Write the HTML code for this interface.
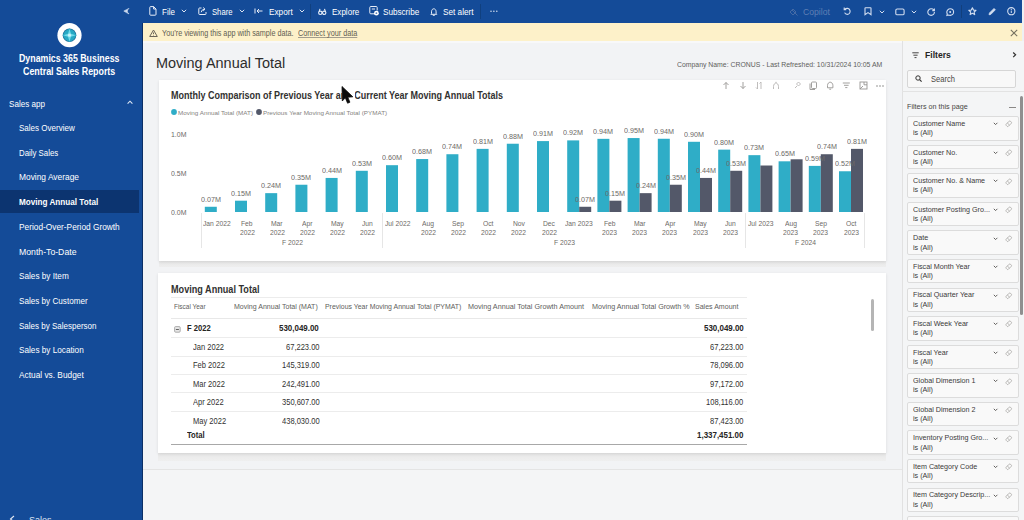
<!DOCTYPE html><html><head><meta charset="utf-8"><style>
html,body{margin:0;padding:0;width:1024px;height:520px;overflow:hidden;background:#f3f4f5;font-family:"Liberation Sans",sans-serif}
.t{position:absolute;white-space:nowrap;line-height:normal;transform-origin:0 0}
.a{position:absolute}
svg{position:absolute;overflow:visible}
</style></head><body>
<div class="a" style="left:0;top:0;width:1024px;height:23px;background:#144b98"></div>
<div class="a" style="left:0;top:0;width:143px;height:520px;background:#144b98"></div>
<div class="a" style="left:142px;top:23px;width:1px;height:497px;background:#0b2f66"></div>
<div class="a" style="left:0;top:189.5px;width:138.5px;height:23.5px;background:#0c3470"></div>
<svg style="left:57px;top:23px" width="25" height="25" viewBox="0 0 25 25">
<circle cx="12.5" cy="12.2" r="12.1" fill="#fff"/>
<circle cx="12.5" cy="12.2" r="6.8" fill="#1f6f9a"/>
<path d="M12.5 5.4 L16.8 7.9 L19.3 12.2 L16.8 16.5 L12.5 19 L8.2 16.5 L5.7 12.2 L8.2 7.9 Z" fill="#27a9c4"/>
<path d="M12.5 6 L14 10.7 L18.7 12.2 L14 13.7 L12.5 18.4 L11 13.7 L6.3 12.2 L11 10.7 Z" fill="#6fd9ea"/>
<circle cx="12.5" cy="12.2" r="1.6" fill="#c9f4fa"/>
</svg>
<div class="t" style="left:19.40px;top:52.83px;font-size:10.47px;font-weight:bold;color:#fff;transform:scaleX(0.842);">Dynamics 365 Business</div>
<div class="t" style="left:23.40px;top:65.83px;font-size:10.47px;font-weight:bold;color:#fff;transform:scaleX(0.848);">Central Sales Reports</div>
<div class="t" style="left:8.75px;top:98.06px;font-size:9.88px;color:#fff;transform:scaleX(0.819);">Sales app</div>
<svg style="left:127px;top:100.3px" width="6" height="5" viewBox="0 0 6 5"><path d="M0.6 3.6 L3 1.2 L5.4 3.6" fill="none" stroke="#dfe8f5" stroke-width="1.1"/></svg>
<svg style="left:123px;top:7.8px" width="7" height="7" viewBox="0 0 7 7"><path d="M6 0.4 Q3.5 1.4 0.8 3.1 Q3.5 4.8 6 5.9 Q2.6 3.1 6 0.4 Z" fill="#cfdcf0" stroke="#cfdcf0" stroke-width="0.6" stroke-linejoin="round"/></svg>
<div class="t" style="left:18.50px;top:122.06px;font-size:9.88px;color:#fff;transform:scaleX(0.813);">Sales Overview</div>
<div class="t" style="left:18.50px;top:146.76px;font-size:9.88px;color:#fff;transform:scaleX(0.793);">Daily Sales</div>
<div class="t" style="left:18.50px;top:171.46px;font-size:9.88px;color:#fff;transform:scaleX(0.849);">Moving Average</div>
<div class="t" style="left:18.50px;top:196.16px;font-size:9.88px;font-weight:bold;color:#fff;transform:scaleX(0.825);">Moving Annual Total</div>
<div class="t" style="left:18.50px;top:220.86px;font-size:9.88px;color:#fff;transform:scaleX(0.842);">Period-Over-Period Growth</div>
<div class="t" style="left:18.50px;top:245.56px;font-size:9.88px;color:#fff;transform:scaleX(0.880);">Month-To-Date</div>
<div class="t" style="left:18.50px;top:270.26px;font-size:9.88px;color:#fff;transform:scaleX(0.831);">Sales by Item</div>
<div class="t" style="left:18.50px;top:294.96px;font-size:9.88px;color:#fff;transform:scaleX(0.823);">Sales by Customer</div>
<div class="t" style="left:18.50px;top:319.66px;font-size:9.88px;color:#fff;transform:scaleX(0.811);">Sales by Salesperson</div>
<div class="t" style="left:18.50px;top:344.36px;font-size:9.88px;color:#fff;transform:scaleX(0.830);">Sales by Location</div>
<div class="t" style="left:18.50px;top:369.06px;font-size:9.88px;color:#fff;transform:scaleX(0.842);">Actual vs. Budget</div>
<div class="t" style="left:29.00px;top:514.32px;font-size:9.59px;color:#dfe6f2;transform:scaleX(0.938);">Sales...</div>
<svg style="left:9px;top:515px" width="6" height="8" viewBox="0 0 6 8"><path d="M5 1 L1.5 4 L5 7" fill="none" stroke="#dfe6f2" stroke-width="1.1"/></svg>
<svg style="left:149.2px;top:6.4px" width="8" height="10" viewBox="0 0 8 10"><path d="M1.6 0.6 H4.6 L7 3 V8.4 Q7 9.2 6.2 9.2 H1.6 Q0.8 9.2 0.8 8.4 V1.4 Q0.8 0.6 1.6 0.6 Z M4.6 0.6 V3 H7" fill="none" stroke="#e8eef8" stroke-width="1"/></svg>
<div class="t" style="left:162.30px;top:7.08px;font-size:9.30px;color:#ffffff;transform:scaleX(0.861);">File</div>
<svg style="left:181.2px;top:9px" width="6" height="4" viewBox="0 0 6 4"><path d="M0.8 0.8 L3 3 L5.2 0.8" fill="none" stroke="#dbe4f2" stroke-width="1"/></svg>
<svg style="left:197.5px;top:7px" width="9" height="9" viewBox="0 0 9 9"><path d="M3.5 1 H1.5 Q0.8 1 0.8 1.7 V6.8 Q0.8 7.5 1.5 7.5 H7.3 Q8 7.5 8 6.8 V5 M3.2 5.2 Q3.5 2.5 6.5 2.2 M5.2 0.5 L7 2.2 L5.2 3.9" fill="none" stroke="#e8eef8" stroke-width="1"/></svg>
<div class="t" style="left:211.60px;top:7.08px;font-size:9.30px;color:#ffffff;transform:scaleX(0.826);">Share</div>
<svg style="left:238.5px;top:9px" width="6" height="4" viewBox="0 0 6 4"><path d="M0.8 0.8 L3 3 L5.2 0.8" fill="none" stroke="#dbe4f2" stroke-width="1"/></svg>
<svg style="left:254px;top:8.3px" width="9" height="6" viewBox="0 0 9 6"><path d="M1 0.5 V5.5 M3 3 H8.5 M5 1 L3 3 L5 5" fill="none" stroke="#e8eef8" stroke-width="1"/></svg>
<div class="t" style="left:268.70px;top:7.08px;font-size:9.30px;color:#ffffff;transform:scaleX(0.882);">Export</div>
<svg style="left:299.2px;top:9px" width="6" height="4" viewBox="0 0 6 4"><path d="M0.8 0.8 L3 3 L5.2 0.8" fill="none" stroke="#dbe4f2" stroke-width="1"/></svg>
<div class="a" style="left:310px;top:4px;width:1px;height:15px;background:#10407f"></div>
<svg style="left:318px;top:8.4px" width="9" height="8" viewBox="0 0 9 8"><circle cx="2.3" cy="4.8" r="1.7" fill="none" stroke="#e8eef8" stroke-width="1.1"/><circle cx="6.2" cy="4.8" r="1.7" fill="none" stroke="#e8eef8" stroke-width="1.1"/><path d="M1.2 3.4 L2 0.8 M7.3 3.4 L6.5 0.8 M3.9 4.5 H4.6" fill="none" stroke="#e8eef8" stroke-width="1.1"/></svg>
<div class="t" style="left:331.50px;top:7.08px;font-size:9.30px;color:#ffffff;transform:scaleX(0.866);">Explore</div>
<svg style="left:368.5px;top:5.8px" width="11" height="11" viewBox="0 0 11 11"><path d="M6 7.8 H1.8 Q0.8 7.8 0.8 6.8 V1.5 Q0.8 0.5 1.8 0.5 H7.2 Q8.2 0.5 8.2 1.5 V4.5 M2.8 3 H6" fill="none" stroke="#e8eef8" stroke-width="1"/><circle cx="7.4" cy="7.2" r="2.4" fill="#fff"/><circle cx="7.4" cy="7.2" r="0.9" fill="#5a7fb8"/></svg>
<div class="t" style="left:383.20px;top:7.08px;font-size:9.30px;color:#ffffff;transform:scaleX(0.875);">Subscribe</div>
<svg style="left:429.8px;top:7.5px" width="8" height="8" viewBox="0 0 8 8"><path d="M1.5 5.5 V3.8 C1.5 2 2.5 0.8 3.8 0.8 C5.1 0.8 6.1 2 6.1 3.8 V5.5 L6.8 6.3 H0.8 Z M2.8 7.3 H4.8" fill="none" stroke="#e8eef8" stroke-width="1"/></svg>
<div class="t" style="left:443.40px;top:7.08px;font-size:9.30px;color:#ffffff;transform:scaleX(0.883);">Set alert</div>
<div class="a" style="left:480px;top:4px;width:1px;height:15px;background:#10407f"></div>
<svg style="left:489.5px;top:10.3px" width="8" height="3" viewBox="0 0 8 3"><circle cx="1" cy="1.2" r="0.75" fill="#dbe4f2"/><circle cx="3.9" cy="1.2" r="0.75" fill="#dbe4f2"/><circle cx="6.8" cy="1.2" r="0.75" fill="#dbe4f2"/></svg>
<svg style="left:788.5px;top:6.5px" width="10" height="10" viewBox="0 0 10 10"><path d="M1 5 L4 2 L7 5 L4 8 Z M3 3 L8.5 8.5" fill="none" stroke="#4a6ea6" stroke-width="0.9"/></svg>
<div class="t" style="left:802.80px;top:6.84px;font-size:9.01px;color:#5f7fb4;transform:scaleX(0.959);">Copilot</div>
<svg style="left:842.5px;top:7px" width="9" height="9" viewBox="0 0 9 9"><path d="M2 2.2 C3.2 0.9 6.2 0.9 7 3.5 C7.6 5.6 6 7.4 4.3 7.4 C3 7.4 2 6.6 1.6 5.6 M1.2 0.6 V2.6 H3.2" fill="none" stroke="#d3def0" stroke-width="1.1"/></svg>
<svg style="left:864.3px;top:7px" width="8" height="9" viewBox="0 0 8 9"><path d="M1.5 0.8 H6.5 Q7 0.8 7 1.3 V7.6 L4 5.6 L1 7.6 V1.3 Q1 0.8 1.5 0.8 Z" fill="none" stroke="#d3def0" stroke-width="1.1"/></svg>
<svg style="left:879px;top:10px" width="6" height="4" viewBox="0 0 6 4"><path d="M0.8 0.8 L3 3 L5.2 0.8" fill="none" stroke="#d3def0" stroke-width="1"/></svg>
<svg style="left:895px;top:7.7px" width="10" height="8" viewBox="0 0 10 8"><rect x="0.8" y="1" width="8.3" height="5.8" rx="1.4" fill="none" stroke="#d3def0" stroke-width="1.1"/></svg>
<svg style="left:910.5px;top:10px" width="6" height="4" viewBox="0 0 6 4"><path d="M0.8 0.8 L3 3 L5.2 0.8" fill="none" stroke="#d3def0" stroke-width="1"/></svg>
<svg style="left:927px;top:7.5px" width="9" height="9" viewBox="0 0 9 9"><path d="M6.9 2 C6.2 1.2 5.2 0.8 4.1 0.8 C2.2 0.8 0.8 2.3 0.8 4.1 C0.8 6 2.2 7.4 4.1 7.4 C6 7.4 7.4 6 7.4 4.1 M7.4 0.5 V2.6 H5.3" fill="none" stroke="#d3def0" stroke-width="1.1"/></svg>
<svg style="left:946px;top:7.5px" width="9" height="9" viewBox="0 0 9 9"><path d="M4.2 0.8 C6.1 0.8 7.6 2.3 7.6 4.1 C7.6 6 6.1 7.4 4.2 7.4 C3.6 7.4 3 7.3 2.5 7 L0.9 7.5 L1.3 6 C1 5.5 0.8 4.8 0.8 4.1 C0.8 2.3 2.3 0.8 4.2 0.8 Z" fill="none" stroke="#d3def0" stroke-width="1.1"/><circle cx="4.2" cy="4.1" r="1" fill="#d3def0"/></svg>
<div class="a" style="left:961px;top:5px;width:0.8px;height:13px;background:#123f7c"></div>
<svg style="left:968.3px;top:7px" width="9" height="9" viewBox="0 0 9 9"><path d="M4.4 0.8 L5.5 3.1 L8 3.3 L6.1 5 L6.7 7.6 L4.4 6.3 L2.1 7.6 L2.7 5 L0.8 3.3 L3.3 3.1 Z" fill="none" stroke="#d3def0" stroke-width="1.1" stroke-linejoin="round"/></svg>
<svg style="left:988.2px;top:7px" width="9" height="9" viewBox="0 0 9 9"><path d="M1 7.8 L1.4 6 L6 1.4 L7.4 2.8 L2.8 7.4 Z" fill="#d3def0" stroke="#d3def0" stroke-width="0.7"/></svg>
<svg style="left:1007px;top:7px" width="9" height="9" viewBox="0 0 9 9"><circle cx="4.3" cy="4.2" r="3.6" fill="none" stroke="#d3def0" stroke-width="1.1"/><path d="M4.3 3.6 V6" stroke="#d3def0" stroke-width="1"/><circle cx="4.3" cy="2.4" r="0.55" fill="#d3def0"/></svg>
<div class="a" style="left:143px;top:23px;width:881px;height:18px;background:#fdf1c9"></div>
<svg style="left:149px;top:28.5px" width="9" height="9" viewBox="0 0 9 9"><path d="M4.5 1 L8.3 7.5 H0.7 Z M4.5 3.5 V5.2 M4.5 6.2 V6.6" fill="none" stroke="#6b6558" stroke-width="1"/></svg>
<div class="t" style="left:162.30px;top:28.47px;font-size:8.43px;color:#625e52;transform:scaleX(0.855);">You’re viewing this app with sample data.</div>
<div class="t" style="left:298.20px;top:28.47px;font-size:8.43px;color:#625e52;transform:scaleX(0.861);text-decoration:underline;text-decoration-color:#a29d8e;">Connect your data</div>
<svg style="left:1009.7px;top:28.8px" width="8" height="8" viewBox="0 0 8 8"><path d="M0.8 0.8 L7.2 7.2 M7.2 0.8 L0.8 7.2" stroke="#757060" stroke-width="1.1"/></svg>
<div class="a" style="left:1021.8px;top:0;width:2.2px;height:520px;background:#eef0f3"></div>
<div class="a" style="left:143px;top:41px;width:759px;height:429px;background:#f2f3f5"></div>
<div class="a" style="left:143px;top:41px;width:881px;height:2px;background:#f8f8f9"></div>
<div class="a" style="left:143px;top:469px;width:759px;height:1px;background:#e4e4e4"></div>
<div class="a" style="left:143px;top:470px;width:759px;height:50px;background:#f4f5f6"></div>
<div class="t" style="left:156.30px;top:54.91px;font-size:14.24px;color:#2d2c2b;transform:scaleX(1.017);">Moving Annual Total</div>
<div class="t" style="left:677.10px;top:60.16px;font-size:7.56px;color:#605e5c;transform:scaleX(0.911);">Company Name: CRONUS - Last Refreshed: 10/31/2024 10:05 AM</div>
<div class="a" style="left:158.7px;top:260.6px;width:727.5px;height:6.5px;background:linear-gradient(#e8e8e8,#eeeeee)"></div>
<div class="a" style="left:158.3px;top:452.5px;width:727.7px;height:8px;background:linear-gradient(#e8e8e8,#efefef)"></div>
<div class="a" style="left:158.7px;top:80px;width:727.3px;height:180.6px;background:#fff;box-shadow:0 1px 3px rgba(0,0,0,0.10)"></div>
<div class="a" style="left:158.3px;top:272.6px;width:727.7px;height:180px;background:#fff;box-shadow:0 1px 3px rgba(0,0,0,0.10)"></div>
<div class="t" style="left:171.00px;top:89.92px;font-size:10.03px;font-weight:bold;color:#323130;transform:scaleX(0.898);">Monthly Comparison of Previous Year and Current Year Moving Annual Totals</div>
<svg style="left:170.5px;top:109.3px" width="6" height="6"><circle cx="3" cy="3" r="2.9" fill="#2fadc7"/></svg>
<div class="t" style="left:177.80px;top:108.84px;font-size:6.25px;color:#858380;transform:scaleX(1.008);">Moving Annual Total (MAT)</div>
<svg style="left:256.2px;top:109.3px" width="6" height="6"><circle cx="3" cy="3" r="2.9" fill="#535869"/></svg>
<div class="t" style="left:263.00px;top:108.84px;font-size:6.25px;color:#858380;transform:scaleX(1.008);">Previous Year Moving Annual Total (PYMAT)</div>
<div class="t" style="left:171.25px;top:129.98px;font-size:7.70px;color:#6d6a67;transform:scaleX(0.905);">1.0M</div>
<div class="t" style="left:171.25px;top:168.85px;font-size:7.70px;color:#6d6a67;transform:scaleX(0.905);">0.5M</div>
<div class="t" style="left:171.25px;top:207.73px;font-size:7.70px;color:#6d6a67;transform:scaleX(0.905);">0.0M</div>
<svg style="left:158px;top:80px" width="728" height="181"><rect x="46.80" y="126.77" width="12.0" height="5.23" fill="#2fadc7"/><rect x="77.00" y="120.70" width="12.0" height="11.30" fill="#2fadc7"/><rect x="107.20" y="113.15" width="12.0" height="18.85" fill="#2fadc7"/><rect x="137.40" y="104.74" width="12.0" height="27.26" fill="#2fadc7"/><rect x="167.60" y="97.94" width="12.0" height="34.06" fill="#2fadc7"/><rect x="197.80" y="90.79" width="12.0" height="41.21" fill="#2fadc7"/><rect x="228.00" y="85.19" width="12.0" height="46.81" fill="#2fadc7"/><rect x="258.20" y="79.05" width="12.0" height="52.95" fill="#2fadc7"/><rect x="288.40" y="74.23" width="12.0" height="57.77" fill="#2fadc7"/><rect x="318.60" y="68.87" width="12.0" height="63.13" fill="#2fadc7"/><rect x="348.80" y="63.74" width="12.0" height="68.26" fill="#2fadc7"/><rect x="379.00" y="61.09" width="12.0" height="70.91" fill="#2fadc7"/><rect x="409.20" y="60.39" width="12.0" height="71.61" fill="#2fadc7"/><rect x="421.20" y="126.77" width="12.0" height="5.23" fill="#535869"/><rect x="439.40" y="58.84" width="12.0" height="73.16" fill="#2fadc7"/><rect x="451.40" y="120.70" width="12.0" height="11.30" fill="#535869"/><rect x="469.60" y="58.06" width="12.0" height="73.94" fill="#2fadc7"/><rect x="481.60" y="113.15" width="12.0" height="18.85" fill="#535869"/><rect x="499.80" y="58.76" width="12.0" height="73.24" fill="#2fadc7"/><rect x="511.80" y="104.74" width="12.0" height="27.26" fill="#535869"/><rect x="530.00" y="61.79" width="12.0" height="70.21" fill="#2fadc7"/><rect x="542.00" y="97.94" width="12.0" height="34.06" fill="#535869"/><rect x="560.20" y="69.64" width="12.0" height="62.36" fill="#2fadc7"/><rect x="572.20" y="90.79" width="12.0" height="41.21" fill="#535869"/><rect x="590.40" y="75.16" width="12.0" height="56.84" fill="#2fadc7"/><rect x="602.40" y="85.51" width="12.0" height="46.49" fill="#535869"/><rect x="620.60" y="81.31" width="12.0" height="50.69" fill="#2fadc7"/><rect x="632.60" y="79.29" width="12.0" height="52.71" fill="#535869"/><rect x="650.80" y="85.89" width="12.0" height="46.11" fill="#2fadc7"/><rect x="662.80" y="74.23" width="12.0" height="57.77" fill="#535869"/><rect x="681.00" y="91.26" width="12.0" height="40.74" fill="#2fadc7"/><rect x="693.00" y="68.87" width="12.0" height="63.13" fill="#535869"/></svg>
<div class="t" style="left:200.80px;top:194.63px;font-size:7.56px;color:#6d6a67;transform:scaleX(0.952);">0.07M</div>
<div class="t" style="left:231.00px;top:188.56px;font-size:7.56px;color:#6d6a67;transform:scaleX(0.952);">0.15M</div>
<div class="t" style="left:261.20px;top:181.01px;font-size:7.56px;color:#6d6a67;transform:scaleX(0.952);">0.24M</div>
<div class="t" style="left:291.40px;top:172.60px;font-size:7.56px;color:#6d6a67;transform:scaleX(0.952);">0.35M</div>
<div class="t" style="left:321.60px;top:165.80px;font-size:7.56px;color:#6d6a67;transform:scaleX(0.952);">0.44M</div>
<div class="t" style="left:351.80px;top:158.65px;font-size:7.56px;color:#6d6a67;transform:scaleX(0.952);">0.53M</div>
<div class="t" style="left:382.00px;top:153.05px;font-size:7.56px;color:#6d6a67;transform:scaleX(0.952);">0.60M</div>
<div class="t" style="left:412.20px;top:146.91px;font-size:7.56px;color:#6d6a67;transform:scaleX(0.952);">0.68M</div>
<div class="t" style="left:442.40px;top:142.09px;font-size:7.56px;color:#6d6a67;transform:scaleX(0.952);">0.74M</div>
<div class="t" style="left:472.60px;top:136.73px;font-size:7.56px;color:#6d6a67;transform:scaleX(0.952);">0.81M</div>
<div class="t" style="left:502.80px;top:131.60px;font-size:7.56px;color:#6d6a67;transform:scaleX(0.952);">0.88M</div>
<div class="t" style="left:533.00px;top:128.95px;font-size:7.56px;color:#6d6a67;transform:scaleX(0.952);">0.91M</div>
<div class="t" style="left:563.20px;top:128.25px;font-size:7.56px;color:#6d6a67;transform:scaleX(0.952);">0.92M</div>
<div class="t" style="left:593.40px;top:126.70px;font-size:7.56px;color:#6d6a67;transform:scaleX(0.952);">0.94M</div>
<div class="t" style="left:623.60px;top:125.92px;font-size:7.56px;color:#6d6a67;transform:scaleX(0.952);">0.95M</div>
<div class="t" style="left:653.80px;top:126.62px;font-size:7.56px;color:#6d6a67;transform:scaleX(0.952);">0.94M</div>
<div class="t" style="left:684.00px;top:129.65px;font-size:7.56px;color:#6d6a67;transform:scaleX(0.952);">0.90M</div>
<div class="t" style="left:714.20px;top:137.50px;font-size:7.56px;color:#6d6a67;transform:scaleX(0.952);">0.80M</div>
<div class="t" style="left:744.40px;top:143.02px;font-size:7.56px;color:#6d6a67;transform:scaleX(0.952);">0.73M</div>
<div class="t" style="left:774.60px;top:149.17px;font-size:7.56px;color:#6d6a67;transform:scaleX(0.952);">0.65M</div>
<div class="t" style="left:804.80px;top:153.75px;font-size:7.56px;color:#6d6a67;transform:scaleX(0.952);">0.59M</div>
<div class="t" style="left:835.00px;top:159.12px;font-size:7.56px;color:#6d6a67;transform:scaleX(0.952);">0.52M</div>
<div class="t" style="left:575.20px;top:194.63px;font-size:7.56px;color:#6d6a67;transform:scaleX(0.952);">0.07M</div>
<div class="t" style="left:605.40px;top:188.56px;font-size:7.56px;color:#6d6a67;transform:scaleX(0.952);">0.15M</div>
<div class="t" style="left:635.60px;top:181.01px;font-size:7.56px;color:#6d6a67;transform:scaleX(0.952);">0.24M</div>
<div class="t" style="left:665.80px;top:172.60px;font-size:7.56px;color:#6d6a67;transform:scaleX(0.952);">0.35M</div>
<div class="t" style="left:696.00px;top:165.80px;font-size:7.56px;color:#6d6a67;transform:scaleX(0.952);">0.44M</div>
<div class="t" style="left:726.20px;top:158.65px;font-size:7.56px;color:#6d6a67;transform:scaleX(0.952);">0.53M</div>
<div class="t" style="left:816.80px;top:142.09px;font-size:7.56px;color:#6d6a67;transform:scaleX(0.952);">0.74M</div>
<div class="t" style="left:847.00px;top:136.73px;font-size:7.56px;color:#6d6a67;transform:scaleX(0.952);">0.81M</div>
<div class="t" style="left:202.93px;top:219.36px;font-size:7.56px;color:#6d6a67;transform:scaleX(0.892);">Jan 2022</div>
<div class="t" style="left:241.19px;top:219.36px;font-size:7.56px;color:#6d6a67;transform:scaleX(0.892);">Feb</div>
<div class="t" style="left:239.50px;top:228.36px;font-size:7.56px;color:#6d6a67;transform:scaleX(0.892);">2022</div>
<div class="t" style="left:271.39px;top:219.36px;font-size:7.56px;color:#6d6a67;transform:scaleX(0.892);">Mar</div>
<div class="t" style="left:269.70px;top:228.36px;font-size:7.56px;color:#6d6a67;transform:scaleX(0.892);">2022</div>
<div class="t" style="left:302.15px;top:219.36px;font-size:7.56px;color:#6d6a67;transform:scaleX(0.892);">Apr</div>
<div class="t" style="left:299.90px;top:228.36px;font-size:7.56px;color:#6d6a67;transform:scaleX(0.892);">2022</div>
<div class="t" style="left:331.23px;top:219.36px;font-size:7.56px;color:#6d6a67;transform:scaleX(0.892);">May</div>
<div class="t" style="left:330.10px;top:228.36px;font-size:7.56px;color:#6d6a67;transform:scaleX(0.892);">2022</div>
<div class="t" style="left:362.36px;top:219.36px;font-size:7.56px;color:#6d6a67;transform:scaleX(0.892);">Jun</div>
<div class="t" style="left:360.30px;top:228.36px;font-size:7.56px;color:#6d6a67;transform:scaleX(0.892);">2022</div>
<div class="t" style="left:385.25px;top:219.36px;font-size:7.56px;color:#6d6a67;transform:scaleX(0.892);">Jul 2022</div>
<div class="t" style="left:422.20px;top:219.36px;font-size:7.56px;color:#6d6a67;transform:scaleX(0.892);">Aug</div>
<div class="t" style="left:420.70px;top:228.36px;font-size:7.56px;color:#6d6a67;transform:scaleX(0.892);">2022</div>
<div class="t" style="left:452.40px;top:219.36px;font-size:7.56px;color:#6d6a67;transform:scaleX(0.892);">Sep</div>
<div class="t" style="left:450.90px;top:228.36px;font-size:7.56px;color:#6d6a67;transform:scaleX(0.892);">2022</div>
<div class="t" style="left:483.35px;top:219.36px;font-size:7.56px;color:#6d6a67;transform:scaleX(0.892);">Oct</div>
<div class="t" style="left:481.10px;top:228.36px;font-size:7.56px;color:#6d6a67;transform:scaleX(0.892);">2022</div>
<div class="t" style="left:512.80px;top:219.36px;font-size:7.56px;color:#6d6a67;transform:scaleX(0.892);">Nov</div>
<div class="t" style="left:511.30px;top:228.36px;font-size:7.56px;color:#6d6a67;transform:scaleX(0.892);">2022</div>
<div class="t" style="left:543.00px;top:219.36px;font-size:7.56px;color:#6d6a67;transform:scaleX(0.892);">Dec</div>
<div class="t" style="left:541.50px;top:228.36px;font-size:7.56px;color:#6d6a67;transform:scaleX(0.892);">2022</div>
<div class="t" style="left:565.33px;top:219.36px;font-size:7.56px;color:#6d6a67;transform:scaleX(0.892);">Jan 2023</div>
<div class="t" style="left:603.59px;top:219.36px;font-size:7.56px;color:#6d6a67;transform:scaleX(0.892);">Feb</div>
<div class="t" style="left:601.90px;top:228.36px;font-size:7.56px;color:#6d6a67;transform:scaleX(0.892);">2023</div>
<div class="t" style="left:633.79px;top:219.36px;font-size:7.56px;color:#6d6a67;transform:scaleX(0.892);">Mar</div>
<div class="t" style="left:632.10px;top:228.36px;font-size:7.56px;color:#6d6a67;transform:scaleX(0.892);">2023</div>
<div class="t" style="left:664.55px;top:219.36px;font-size:7.56px;color:#6d6a67;transform:scaleX(0.892);">Apr</div>
<div class="t" style="left:662.30px;top:228.36px;font-size:7.56px;color:#6d6a67;transform:scaleX(0.892);">2023</div>
<div class="t" style="left:693.63px;top:219.36px;font-size:7.56px;color:#6d6a67;transform:scaleX(0.892);">May</div>
<div class="t" style="left:692.50px;top:228.36px;font-size:7.56px;color:#6d6a67;transform:scaleX(0.892);">2023</div>
<div class="t" style="left:724.76px;top:219.36px;font-size:7.56px;color:#6d6a67;transform:scaleX(0.892);">Jun</div>
<div class="t" style="left:722.70px;top:228.36px;font-size:7.56px;color:#6d6a67;transform:scaleX(0.892);">2023</div>
<div class="t" style="left:747.65px;top:219.36px;font-size:7.56px;color:#6d6a67;transform:scaleX(0.892);">Jul 2023</div>
<div class="t" style="left:784.60px;top:219.36px;font-size:7.56px;color:#6d6a67;transform:scaleX(0.892);">Aug</div>
<div class="t" style="left:783.10px;top:228.36px;font-size:7.56px;color:#6d6a67;transform:scaleX(0.892);">2023</div>
<div class="t" style="left:814.80px;top:219.36px;font-size:7.56px;color:#6d6a67;transform:scaleX(0.892);">Sep</div>
<div class="t" style="left:813.30px;top:228.36px;font-size:7.56px;color:#6d6a67;transform:scaleX(0.892);">2023</div>
<div class="t" style="left:845.75px;top:219.36px;font-size:7.56px;color:#6d6a67;transform:scaleX(0.892);">Oct</div>
<div class="t" style="left:843.50px;top:228.36px;font-size:7.56px;color:#6d6a67;transform:scaleX(0.892);">2023</div>
<div class="t" style="left:281.80px;top:237.86px;font-size:7.56px;color:#6d6a67;transform:scaleX(0.892);">F 2022</div>
<div class="t" style="left:553.60px;top:237.86px;font-size:7.56px;color:#6d6a67;transform:scaleX(0.892);">F 2023</div>
<div class="t" style="left:795.20px;top:237.86px;font-size:7.56px;color:#6d6a67;transform:scaleX(0.892);">F 2024</div>
<div class="a" style="left:200.8px;top:213px;width:0.8px;height:35px;background:#e6e6e6"></div>
<div class="a" style="left:382.4px;top:213px;width:0.8px;height:35px;background:#e6e6e6"></div>
<div class="a" style="left:745.0px;top:213px;width:0.8px;height:35px;background:#e6e6e6"></div>
<div class="a" style="left:864.1px;top:213px;width:0.8px;height:35px;background:#e6e6e6"></div>
<svg style="left:722.3px;top:81.4px" width="8" height="9" viewBox="0 0 8 9"><path d="M4 8 V1.5 M1.5 4 L4 1.5 L6.5 4" fill="none" stroke="#979593" stroke-width="0.9"/></svg>
<svg style="left:739px;top:81.4px" width="8" height="9" viewBox="0 0 8 9"><path d="M4 1 V7.5 M1.5 5 L4 7.5 L6.5 5" fill="none" stroke="#979593" stroke-width="0.9"/></svg>
<svg style="left:755px;top:81.4px" width="8" height="9" viewBox="0 0 8 9"><path d="M2.5 1 V8 M6 1 V8 M1 6.5 L2.5 8 M4.5 2.5 L6 1" fill="none" stroke="#b8b6b4" stroke-width="0.9"/></svg>
<svg style="left:772px;top:81.4px" width="8" height="9" viewBox="0 0 8 9"><path d="M1.5 8 V5.5 C1.5 3.5 2.8 2 4 2 C5.2 2 6.5 3.5 6.5 5.5 V8 M4 2 V0.8" fill="none" stroke="#b8b6b4" stroke-width="0.9"/></svg>
<svg style="left:792.5px;top:81.4px" width="9" height="9" viewBox="0 0 9 9"><path d="M2 7 L4 5 M3.5 3 L5.5 1 L7.5 3 L5.5 5 Z" fill="none" stroke="#b8b6b4" stroke-width="0.9"/></svg>
<svg style="left:809px;top:81.4px" width="9" height="9" viewBox="0 0 9 9"><rect x="2.5" y="1" width="5" height="6.5" rx="1" fill="none" stroke="#979593" stroke-width="0.9"/><path d="M1 2.5 V8.5 H6" fill="none" stroke="#979593" stroke-width="0.9"/></svg>
<svg style="left:825.8px;top:81.4px" width="9" height="9" viewBox="0 0 9 9"><path d="M1.5 6.8 V4.5 C1.5 2.6 2.8 1.2 4.2 1.2 C5.6 1.2 6.9 2.6 6.9 4.5 V6.8 H1.5 M3.3 8.2 H5.1" fill="none" stroke="#979593" stroke-width="0.9"/></svg>
<svg style="left:842.2px;top:81.4px" width="9" height="9" viewBox="0 0 9 9"><path d="M0.8 2 H7.8 M2 4.3 H6.6 M3.2 6.6 H5.4" fill="none" stroke="#979593" stroke-width="0.9"/></svg>
<svg style="left:858.5px;top:81.4px" width="9" height="9" viewBox="0 0 9 9"><rect x="1" y="1" width="7" height="7" fill="none" stroke="#979593" stroke-width="0.9"/><path d="M5 1 V3.8 H8 M1 8 L4 5" fill="none" stroke="#979593" stroke-width="0.9"/></svg>
<svg style="left:876px;top:84.8px" width="9" height="3"><circle cx="1" cy="1" r="0.8" fill="#8a8886"/><circle cx="4" cy="1" r="0.8" fill="#8a8886"/><circle cx="7" cy="1" r="0.8" fill="#8a8886"/></svg>
<div class="t" style="left:171.10px;top:283.93px;font-size:10.47px;font-weight:bold;color:#323130;transform:scaleX(0.870);">Moving Annual Total</div>
<div class="a" style="left:171px;top:297px;width:575.6px;height:1px;background:#ececec"></div>
<div class="t" style="left:173.70px;top:302.95px;font-size:7.12px;color:#605e5c;transform:scaleX(0.907);">Fiscal Year</div>
<div class="t" style="left:234.00px;top:302.95px;font-size:7.12px;color:#605e5c;transform:scaleX(0.989);">Moving Annual Total (MAT)</div>
<div class="t" style="left:325.20px;top:302.95px;font-size:7.12px;color:#605e5c;transform:scaleX(0.974);">Previous Year Moving Annual Total (PYMAT)</div>
<div class="t" style="left:468.20px;top:302.95px;font-size:7.12px;color:#605e5c;transform:scaleX(1.014);">Moving Annual Total Growth Amount</div>
<div class="t" style="left:591.60px;top:302.95px;font-size:7.12px;color:#605e5c;transform:scaleX(1.010);">Moving Annual Total Growth %</div>
<div class="t" style="left:695.30px;top:302.95px;font-size:7.12px;color:#605e5c;transform:scaleX(0.990);">Sales Amount</div>
<div class="a" style="left:171px;top:318.3px;width:575.6px;height:1px;background:#e8e8e8"></div>
<svg style="left:174.2px;top:325.6px" width="7" height="7" viewBox="0 0 7 7"><rect x="0.6" y="0.6" width="5.6" height="5.6" rx="1" fill="#e6e6e6" stroke="#9a9a9a" stroke-width="0.8"/><path d="M1.9 3.5 H4.9" stroke="#555" stroke-width="0.9"/></svg>
<div class="t" style="left:186.90px;top:323.50px;font-size:8.28px;font-weight:bold;color:#252423;transform:scaleX(0.919);">F 2022</div>
<div class="t" style="left:279.40px;top:323.50px;font-size:8.28px;font-weight:bold;color:#252423;transform:scaleX(0.962);">530,049.00</div>
<div class="t" style="left:703.80px;top:323.50px;font-size:8.28px;font-weight:bold;color:#252423;transform:scaleX(0.962);">530,049.00</div>
<div class="a" style="left:171px;top:337.4px;width:575.6px;height:1px;background:#ececec"></div>
<div class="t" style="left:192.80px;top:342.60px;font-size:8.28px;color:#323130;transform:scaleX(0.912);">Jan 2022</div>
<div class="t" style="left:286.10px;top:342.60px;font-size:8.28px;color:#323130;transform:scaleX(0.912);">67,223.00</div>
<div class="t" style="left:710.10px;top:342.60px;font-size:8.28px;color:#323130;transform:scaleX(0.912);">67,223.00</div>
<div class="a" style="left:171px;top:355.6px;width:575.6px;height:1px;background:#ececec"></div>
<div class="t" style="left:192.80px;top:361.10px;font-size:8.28px;color:#323130;transform:scaleX(0.912);">Feb 2022</div>
<div class="t" style="left:281.90px;top:361.10px;font-size:8.28px;color:#323130;transform:scaleX(0.912);">145,319.00</div>
<div class="t" style="left:710.10px;top:361.10px;font-size:8.28px;color:#323130;transform:scaleX(0.912);">78,096.00</div>
<div class="a" style="left:171px;top:373.9px;width:575.6px;height:1px;background:#ececec"></div>
<div class="t" style="left:192.80px;top:379.50px;font-size:8.28px;color:#323130;transform:scaleX(0.912);">Mar 2022</div>
<div class="t" style="left:281.90px;top:379.50px;font-size:8.28px;color:#323130;transform:scaleX(0.912);">242,491.00</div>
<div class="t" style="left:710.10px;top:379.50px;font-size:8.28px;color:#323130;transform:scaleX(0.912);">97,172.00</div>
<div class="a" style="left:171px;top:392.3px;width:575.6px;height:1px;background:#ececec"></div>
<div class="t" style="left:192.80px;top:397.50px;font-size:8.28px;color:#323130;transform:scaleX(0.912);">Apr 2022</div>
<div class="t" style="left:281.90px;top:397.50px;font-size:8.28px;color:#323130;transform:scaleX(0.912);">350,607.00</div>
<div class="t" style="left:706.46px;top:397.50px;font-size:8.28px;color:#323130;transform:scaleX(0.912);">108,116.00</div>
<div class="a" style="left:171px;top:410.8px;width:575.6px;height:1px;background:#ececec"></div>
<div class="t" style="left:192.80px;top:416.50px;font-size:8.28px;color:#323130;transform:scaleX(0.912);">May 2022</div>
<div class="t" style="left:281.90px;top:416.50px;font-size:8.28px;color:#323130;transform:scaleX(0.912);">438,030.00</div>
<div class="t" style="left:710.10px;top:416.50px;font-size:8.28px;color:#323130;transform:scaleX(0.912);">87,423.00</div>
<div class="t" style="left:187.20px;top:430.90px;font-size:8.28px;font-weight:bold;color:#252423;transform:scaleX(0.928);">Total</div>
<div class="t" style="left:697.15px;top:430.90px;font-size:8.28px;font-weight:bold;color:#252423;transform:scaleX(0.962);">1,337,451.00</div>
<div class="a" style="left:171px;top:443.6px;width:575.6px;height:1px;background:#a8a8a8"></div>
<div class="a" style="left:870.8px;top:298.5px;width:3.6px;height:32px;border-radius:2px;background:#b5b5b5"></div>
<div class="a" style="left:902px;top:41px;width:122px;height:479px;background:#f4f5f6"></div>
<div class="a" style="left:902px;top:41px;width:1px;height:479px;background:#e1e1e1"></div>
<svg style="left:911.5px;top:51.5px" width="7" height="7" viewBox="0 0 7 7"><path d="M0.3 0.8 H6.7 M1.4 3.2 H5.6 M2.5 5.6 H4.5" stroke="#323130" stroke-width="0.9"/></svg>
<div class="t" style="left:924.60px;top:49.06px;font-size:9.88px;font-weight:bold;color:#252423;transform:scaleX(0.870);">Filters</div>
<svg style="left:1011.8px;top:51px" width="5" height="8" viewBox="0 0 5 8"><path d="M1.2 1.5 L3.6 3.8 L1.2 6.1" fill="none" stroke="#323130" stroke-width="1.2"/></svg>
<div class="a" style="left:907.3px;top:69.6px;width:108.7px;height:18.6px;box-sizing:border-box;border:1px solid #d6d6d6;border-radius:2px;background:#f8f8f8"></div>
<svg style="left:915px;top:75px" width="7" height="7" viewBox="0 0 7 7"><circle cx="3" cy="3" r="2.2" fill="none" stroke="#323130" stroke-width="1"/><path d="M4.6 4.6 L6.6 6.6" stroke="#323130" stroke-width="1.1"/></svg>
<div class="t" style="left:931.40px;top:74.83px;font-size:8.14px;color:#484644;transform:scaleX(0.927);">Search</div>
<div class="a" style="left:902px;top:90.5px;width:122px;height:1px;background:#e3e3e3"></div>
<div class="t" style="left:907.30px;top:102.20px;font-size:7.85px;color:#484644;transform:scaleX(0.915);">Filters on this page</div>
<div class="a" style="left:1009px;top:107px;width:6.5px;height:0.8px;background:#8a8886"></div>
<div class="a" style="left:1019.8px;top:96px;width:3.2px;height:218.6px;border-radius:1.6px;background:#8f8f8f"></div>
<div class="a" style="left:907px;top:116.10px;width:111.5px;height:24.5px;box-sizing:border-box;border:1px solid #dcdcdc;border-radius:2px;background:#f9f9f9"></div>
<div class="t" style="left:912.80px;top:119.00px;font-size:7.85px;color:#3b3a39;transform:scaleX(0.914);">Customer Name</div>
<div class="t" style="left:912.80px;top:128.30px;font-size:7.85px;color:#3b3a39;transform:scaleX(0.914);">is (All)</div>
<svg style="left:992.6px;top:122.3px" width="6" height="4" viewBox="0 0 6 4"><path d="M0.8 0.8 L2.6 2.6 L4.4 0.8" fill="none" stroke="#605e5c" stroke-width="1"/></svg>
<svg style="left:1005px;top:120.39999999999999px" width="7" height="7" viewBox="0 0 7 7"><path d="M1.2 4.2 L4.2 1.2 Q4.8 0.6 5.4 1.2 L6.3 2.1 Q6.9 2.7 6.3 3.3 L3.3 6.3 Q2.7 6.9 2.1 6.3 L1.2 5.4 Q0.6 4.8 1.2 4.2 Z M2.4 3 L4.5 5.1" fill="none" stroke="#a6a4a2" stroke-width="0.8"/></svg>
<div class="a" style="left:907px;top:144.67px;width:111.5px;height:24.5px;box-sizing:border-box;border:1px solid #dcdcdc;border-radius:2px;background:#f9f9f9"></div>
<div class="t" style="left:912.80px;top:147.57px;font-size:7.85px;color:#3b3a39;transform:scaleX(0.914);">Customer No.</div>
<div class="t" style="left:912.80px;top:156.87px;font-size:7.85px;color:#3b3a39;transform:scaleX(0.914);">is (All)</div>
<svg style="left:992.6px;top:150.86999999999998px" width="6" height="4" viewBox="0 0 6 4"><path d="M0.8 0.8 L2.6 2.6 L4.4 0.8" fill="none" stroke="#605e5c" stroke-width="1"/></svg>
<svg style="left:1005px;top:148.97px" width="7" height="7" viewBox="0 0 7 7"><path d="M1.2 4.2 L4.2 1.2 Q4.8 0.6 5.4 1.2 L6.3 2.1 Q6.9 2.7 6.3 3.3 L3.3 6.3 Q2.7 6.9 2.1 6.3 L1.2 5.4 Q0.6 4.8 1.2 4.2 Z M2.4 3 L4.5 5.1" fill="none" stroke="#a6a4a2" stroke-width="0.8"/></svg>
<div class="a" style="left:907px;top:173.24px;width:111.5px;height:24.5px;box-sizing:border-box;border:1px solid #dcdcdc;border-radius:2px;background:#f9f9f9"></div>
<div class="t" style="left:912.80px;top:176.14px;font-size:7.85px;color:#3b3a39;transform:scaleX(0.914);">Customer No. &amp; Name</div>
<div class="t" style="left:912.80px;top:185.44px;font-size:7.85px;color:#3b3a39;transform:scaleX(0.914);">is (All)</div>
<svg style="left:992.6px;top:179.44px" width="6" height="4" viewBox="0 0 6 4"><path d="M0.8 0.8 L2.6 2.6 L4.4 0.8" fill="none" stroke="#605e5c" stroke-width="1"/></svg>
<svg style="left:1005px;top:177.54000000000002px" width="7" height="7" viewBox="0 0 7 7"><path d="M1.2 4.2 L4.2 1.2 Q4.8 0.6 5.4 1.2 L6.3 2.1 Q6.9 2.7 6.3 3.3 L3.3 6.3 Q2.7 6.9 2.1 6.3 L1.2 5.4 Q0.6 4.8 1.2 4.2 Z M2.4 3 L4.5 5.1" fill="none" stroke="#a6a4a2" stroke-width="0.8"/></svg>
<div class="a" style="left:907px;top:201.81px;width:111.5px;height:24.5px;box-sizing:border-box;border:1px solid #dcdcdc;border-radius:2px;background:#f9f9f9"></div>
<div class="t" style="left:912.80px;top:204.71px;font-size:7.85px;color:#3b3a39;transform:scaleX(0.914);">Customer Posting Gro...</div>
<div class="t" style="left:912.80px;top:214.01px;font-size:7.85px;color:#3b3a39;transform:scaleX(0.914);">is (All)</div>
<svg style="left:992.6px;top:208.01px" width="6" height="4" viewBox="0 0 6 4"><path d="M0.8 0.8 L2.6 2.6 L4.4 0.8" fill="none" stroke="#605e5c" stroke-width="1"/></svg>
<svg style="left:1005px;top:206.11px" width="7" height="7" viewBox="0 0 7 7"><path d="M1.2 4.2 L4.2 1.2 Q4.8 0.6 5.4 1.2 L6.3 2.1 Q6.9 2.7 6.3 3.3 L3.3 6.3 Q2.7 6.9 2.1 6.3 L1.2 5.4 Q0.6 4.8 1.2 4.2 Z M2.4 3 L4.5 5.1" fill="none" stroke="#a6a4a2" stroke-width="0.8"/></svg>
<div class="a" style="left:907px;top:230.38px;width:111.5px;height:24.5px;box-sizing:border-box;border:1px solid #dcdcdc;border-radius:2px;background:#f9f9f9"></div>
<div class="t" style="left:912.80px;top:233.28px;font-size:7.85px;color:#3b3a39;transform:scaleX(0.914);">Date</div>
<div class="t" style="left:912.80px;top:242.58px;font-size:7.85px;color:#3b3a39;transform:scaleX(0.914);">is (All)</div>
<svg style="left:992.6px;top:236.57999999999998px" width="6" height="4" viewBox="0 0 6 4"><path d="M0.8 0.8 L2.6 2.6 L4.4 0.8" fill="none" stroke="#605e5c" stroke-width="1"/></svg>
<svg style="left:1005px;top:234.68px" width="7" height="7" viewBox="0 0 7 7"><path d="M1.2 4.2 L4.2 1.2 Q4.8 0.6 5.4 1.2 L6.3 2.1 Q6.9 2.7 6.3 3.3 L3.3 6.3 Q2.7 6.9 2.1 6.3 L1.2 5.4 Q0.6 4.8 1.2 4.2 Z M2.4 3 L4.5 5.1" fill="none" stroke="#a6a4a2" stroke-width="0.8"/></svg>
<div class="a" style="left:907px;top:258.95px;width:111.5px;height:24.5px;box-sizing:border-box;border:1px solid #dcdcdc;border-radius:2px;background:#f9f9f9"></div>
<div class="t" style="left:912.80px;top:261.85px;font-size:7.85px;color:#3b3a39;transform:scaleX(0.914);">Fiscal Month Year</div>
<div class="t" style="left:912.80px;top:271.15px;font-size:7.85px;color:#3b3a39;transform:scaleX(0.914);">is (All)</div>
<svg style="left:992.6px;top:265.15px" width="6" height="4" viewBox="0 0 6 4"><path d="M0.8 0.8 L2.6 2.6 L4.4 0.8" fill="none" stroke="#605e5c" stroke-width="1"/></svg>
<svg style="left:1005px;top:263.25px" width="7" height="7" viewBox="0 0 7 7"><path d="M1.2 4.2 L4.2 1.2 Q4.8 0.6 5.4 1.2 L6.3 2.1 Q6.9 2.7 6.3 3.3 L3.3 6.3 Q2.7 6.9 2.1 6.3 L1.2 5.4 Q0.6 4.8 1.2 4.2 Z M2.4 3 L4.5 5.1" fill="none" stroke="#a6a4a2" stroke-width="0.8"/></svg>
<div class="a" style="left:907px;top:287.52px;width:111.5px;height:24.5px;box-sizing:border-box;border:1px solid #dcdcdc;border-radius:2px;background:#f9f9f9"></div>
<div class="t" style="left:912.80px;top:290.42px;font-size:7.85px;color:#3b3a39;transform:scaleX(0.914);">Fiscal Quarter Year</div>
<div class="t" style="left:912.80px;top:299.72px;font-size:7.85px;color:#3b3a39;transform:scaleX(0.914);">is (All)</div>
<svg style="left:992.6px;top:293.71999999999997px" width="6" height="4" viewBox="0 0 6 4"><path d="M0.8 0.8 L2.6 2.6 L4.4 0.8" fill="none" stroke="#605e5c" stroke-width="1"/></svg>
<svg style="left:1005px;top:291.82px" width="7" height="7" viewBox="0 0 7 7"><path d="M1.2 4.2 L4.2 1.2 Q4.8 0.6 5.4 1.2 L6.3 2.1 Q6.9 2.7 6.3 3.3 L3.3 6.3 Q2.7 6.9 2.1 6.3 L1.2 5.4 Q0.6 4.8 1.2 4.2 Z M2.4 3 L4.5 5.1" fill="none" stroke="#a6a4a2" stroke-width="0.8"/></svg>
<div class="a" style="left:907px;top:316.09px;width:111.5px;height:24.5px;box-sizing:border-box;border:1px solid #dcdcdc;border-radius:2px;background:#f9f9f9"></div>
<div class="t" style="left:912.80px;top:318.99px;font-size:7.85px;color:#3b3a39;transform:scaleX(0.914);">Fiscal Week Year</div>
<div class="t" style="left:912.80px;top:328.29px;font-size:7.85px;color:#3b3a39;transform:scaleX(0.914);">is (All)</div>
<svg style="left:992.6px;top:322.29px" width="6" height="4" viewBox="0 0 6 4"><path d="M0.8 0.8 L2.6 2.6 L4.4 0.8" fill="none" stroke="#605e5c" stroke-width="1"/></svg>
<svg style="left:1005px;top:320.39000000000004px" width="7" height="7" viewBox="0 0 7 7"><path d="M1.2 4.2 L4.2 1.2 Q4.8 0.6 5.4 1.2 L6.3 2.1 Q6.9 2.7 6.3 3.3 L3.3 6.3 Q2.7 6.9 2.1 6.3 L1.2 5.4 Q0.6 4.8 1.2 4.2 Z M2.4 3 L4.5 5.1" fill="none" stroke="#a6a4a2" stroke-width="0.8"/></svg>
<div class="a" style="left:907px;top:344.66px;width:111.5px;height:24.5px;box-sizing:border-box;border:1px solid #dcdcdc;border-radius:2px;background:#f9f9f9"></div>
<div class="t" style="left:912.80px;top:347.56px;font-size:7.85px;color:#3b3a39;transform:scaleX(0.914);">Fiscal Year</div>
<div class="t" style="left:912.80px;top:356.86px;font-size:7.85px;color:#3b3a39;transform:scaleX(0.914);">is (All)</div>
<svg style="left:992.6px;top:350.85999999999996px" width="6" height="4" viewBox="0 0 6 4"><path d="M0.8 0.8 L2.6 2.6 L4.4 0.8" fill="none" stroke="#605e5c" stroke-width="1"/></svg>
<svg style="left:1005px;top:348.96px" width="7" height="7" viewBox="0 0 7 7"><path d="M1.2 4.2 L4.2 1.2 Q4.8 0.6 5.4 1.2 L6.3 2.1 Q6.9 2.7 6.3 3.3 L3.3 6.3 Q2.7 6.9 2.1 6.3 L1.2 5.4 Q0.6 4.8 1.2 4.2 Z M2.4 3 L4.5 5.1" fill="none" stroke="#a6a4a2" stroke-width="0.8"/></svg>
<div class="a" style="left:907px;top:373.23px;width:111.5px;height:24.5px;box-sizing:border-box;border:1px solid #dcdcdc;border-radius:2px;background:#f9f9f9"></div>
<div class="t" style="left:912.80px;top:376.13px;font-size:7.85px;color:#3b3a39;transform:scaleX(0.914);">Global Dimension 1</div>
<div class="t" style="left:912.80px;top:385.43px;font-size:7.85px;color:#3b3a39;transform:scaleX(0.914);">is (All)</div>
<svg style="left:992.6px;top:379.43px" width="6" height="4" viewBox="0 0 6 4"><path d="M0.8 0.8 L2.6 2.6 L4.4 0.8" fill="none" stroke="#605e5c" stroke-width="1"/></svg>
<svg style="left:1005px;top:377.53000000000003px" width="7" height="7" viewBox="0 0 7 7"><path d="M1.2 4.2 L4.2 1.2 Q4.8 0.6 5.4 1.2 L6.3 2.1 Q6.9 2.7 6.3 3.3 L3.3 6.3 Q2.7 6.9 2.1 6.3 L1.2 5.4 Q0.6 4.8 1.2 4.2 Z M2.4 3 L4.5 5.1" fill="none" stroke="#a6a4a2" stroke-width="0.8"/></svg>
<div class="a" style="left:907px;top:401.80px;width:111.5px;height:24.5px;box-sizing:border-box;border:1px solid #dcdcdc;border-radius:2px;background:#f9f9f9"></div>
<div class="t" style="left:912.80px;top:404.70px;font-size:7.85px;color:#3b3a39;transform:scaleX(0.914);">Global Dimension 2</div>
<div class="t" style="left:912.80px;top:414.00px;font-size:7.85px;color:#3b3a39;transform:scaleX(0.914);">is (All)</div>
<svg style="left:992.6px;top:407.99999999999994px" width="6" height="4" viewBox="0 0 6 4"><path d="M0.8 0.8 L2.6 2.6 L4.4 0.8" fill="none" stroke="#605e5c" stroke-width="1"/></svg>
<svg style="left:1005px;top:406.09999999999997px" width="7" height="7" viewBox="0 0 7 7"><path d="M1.2 4.2 L4.2 1.2 Q4.8 0.6 5.4 1.2 L6.3 2.1 Q6.9 2.7 6.3 3.3 L3.3 6.3 Q2.7 6.9 2.1 6.3 L1.2 5.4 Q0.6 4.8 1.2 4.2 Z M2.4 3 L4.5 5.1" fill="none" stroke="#a6a4a2" stroke-width="0.8"/></svg>
<div class="a" style="left:907px;top:430.37px;width:111.5px;height:24.5px;box-sizing:border-box;border:1px solid #dcdcdc;border-radius:2px;background:#f9f9f9"></div>
<div class="t" style="left:912.80px;top:433.27px;font-size:7.85px;color:#3b3a39;transform:scaleX(0.914);">Inventory Posting Gro...</div>
<div class="t" style="left:912.80px;top:442.57px;font-size:7.85px;color:#3b3a39;transform:scaleX(0.914);">is (All)</div>
<svg style="left:992.6px;top:436.57px" width="6" height="4" viewBox="0 0 6 4"><path d="M0.8 0.8 L2.6 2.6 L4.4 0.8" fill="none" stroke="#605e5c" stroke-width="1"/></svg>
<svg style="left:1005px;top:434.67px" width="7" height="7" viewBox="0 0 7 7"><path d="M1.2 4.2 L4.2 1.2 Q4.8 0.6 5.4 1.2 L6.3 2.1 Q6.9 2.7 6.3 3.3 L3.3 6.3 Q2.7 6.9 2.1 6.3 L1.2 5.4 Q0.6 4.8 1.2 4.2 Z M2.4 3 L4.5 5.1" fill="none" stroke="#a6a4a2" stroke-width="0.8"/></svg>
<div class="a" style="left:907px;top:458.94px;width:111.5px;height:24.5px;box-sizing:border-box;border:1px solid #dcdcdc;border-radius:2px;background:#f9f9f9"></div>
<div class="t" style="left:912.80px;top:461.84px;font-size:7.85px;color:#3b3a39;transform:scaleX(0.914);">Item Category Code</div>
<div class="t" style="left:912.80px;top:471.14px;font-size:7.85px;color:#3b3a39;transform:scaleX(0.914);">is (All)</div>
<svg style="left:992.6px;top:465.14000000000004px" width="6" height="4" viewBox="0 0 6 4"><path d="M0.8 0.8 L2.6 2.6 L4.4 0.8" fill="none" stroke="#605e5c" stroke-width="1"/></svg>
<svg style="left:1005px;top:463.24000000000007px" width="7" height="7" viewBox="0 0 7 7"><path d="M1.2 4.2 L4.2 1.2 Q4.8 0.6 5.4 1.2 L6.3 2.1 Q6.9 2.7 6.3 3.3 L3.3 6.3 Q2.7 6.9 2.1 6.3 L1.2 5.4 Q0.6 4.8 1.2 4.2 Z M2.4 3 L4.5 5.1" fill="none" stroke="#a6a4a2" stroke-width="0.8"/></svg>
<div class="a" style="left:907px;top:487.51px;width:111.5px;height:24.5px;box-sizing:border-box;border:1px solid #dcdcdc;border-radius:2px;background:#f9f9f9"></div>
<div class="t" style="left:912.80px;top:490.41px;font-size:7.85px;color:#3b3a39;transform:scaleX(0.914);">Item Category Descrip...</div>
<div class="t" style="left:912.80px;top:499.71px;font-size:7.85px;color:#3b3a39;transform:scaleX(0.914);">is (All)</div>
<svg style="left:992.6px;top:493.71px" width="6" height="4" viewBox="0 0 6 4"><path d="M0.8 0.8 L2.6 2.6 L4.4 0.8" fill="none" stroke="#605e5c" stroke-width="1"/></svg>
<svg style="left:1005px;top:491.81px" width="7" height="7" viewBox="0 0 7 7"><path d="M1.2 4.2 L4.2 1.2 Q4.8 0.6 5.4 1.2 L6.3 2.1 Q6.9 2.7 6.3 3.3 L3.3 6.3 Q2.7 6.9 2.1 6.3 L1.2 5.4 Q0.6 4.8 1.2 4.2 Z M2.4 3 L4.5 5.1" fill="none" stroke="#a6a4a2" stroke-width="0.8"/></svg>
<div class="a" style="left:907px;top:516.08px;width:111.5px;height:24.5px;box-sizing:border-box;border:1px solid #dcdcdc;border-radius:2px;background:#f9f9f9"></div>
<div class="t" style="left:912.80px;top:518.98px;font-size:7.85px;color:#3b3a39;transform:scaleX(0.914);">Item No.</div>
<div class="t" style="left:912.80px;top:528.28px;font-size:7.85px;color:#3b3a39;transform:scaleX(0.914);">is (All)</div>
<svg style="left:992.6px;top:522.2800000000001px" width="6" height="4" viewBox="0 0 6 4"><path d="M0.8 0.8 L2.6 2.6 L4.4 0.8" fill="none" stroke="#605e5c" stroke-width="1"/></svg>
<svg style="left:1005px;top:520.38px" width="7" height="7" viewBox="0 0 7 7"><path d="M1.2 4.2 L4.2 1.2 Q4.8 0.6 5.4 1.2 L6.3 2.1 Q6.9 2.7 6.3 3.3 L3.3 6.3 Q2.7 6.9 2.1 6.3 L1.2 5.4 Q0.6 4.8 1.2 4.2 Z M2.4 3 L4.5 5.1" fill="none" stroke="#a6a4a2" stroke-width="0.8"/></svg>
<div class="a" style="left:341.5px;top:88px;width:13px;height:13px;background:#fff"></div>
<svg style="left:340px;top:84px" width="16" height="22" viewBox="0 0 16 22"><path d="M2 2.5 L2.3 17 L5.3 13.8 L7.6 19.2 L9.9 18.2 L7.8 13.2 L12.8 12.8 Z" fill="#0a0a0a" stroke="#0a0a0a" stroke-width="0.8" stroke-linejoin="round"/></svg>
</body></html>
